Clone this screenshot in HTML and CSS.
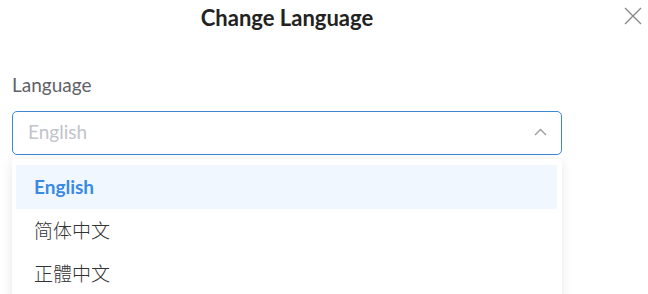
FILE: index.html
```html
<!DOCTYPE html>
<html>
<head>
<meta charset="utf-8">
<link rel="stylesheet" href="styles.css">
</head>
<body>
<div class="dialog">
  <div class="header">
    <div class="title">Change Language</div>
    <div class="close">
      <svg width="18" height="18" viewBox="0 0 18 18"><path d="M1 1 L17 17 M17 1 L1 17" stroke="#8a8a8a" stroke-width="1.4" fill="none"/></svg>
    </div>
  </div>
  <div class="field">
    <div class="label">Language</div>
    <div class="select">
      <span class="placeholder">English</span>
      <svg class="chev" width="13" height="8" viewBox="0 0 13 8"><path d="M1 7 L6.5 1.5 L12 7" stroke="#9a9a9a" stroke-width="1.3" fill="none"/></svg>
    </div>
    <div class="dropdown">
      <div class="item active">English</div>
      <div class="item cjk">简体中文</div>
      <div class="item cjk">正體中文</div>
    </div>
  </div>
</div>
</body>
</html>
```
FILE: styles.css
```css
html, body {
  margin: 0;
  padding: 0;
  background: #ffffff;
  font-family: Lato, "Noto Sans CJK SC", sans-serif;
}
.dialog {
  width: 648px;
  height: 294px;
  overflow: hidden;
}
.header {
  display: flex;
  align-items: flex-start;
  padding-left: 12px;
  height: 60px;
}
.title {
  width: 550px;
  text-align: center;
  font-weight: 700;
  font-size: 22px;
  color: #222222;
  padding-top: 5px;
  line-height: 26px;
}
.close {
  margin-left: 62px;
  padding-top: 7px;
  line-height: 0;
}
.field {
  padding-left: 12px;
  width: 550px;
}
.label {
  font-size: 19px;
  color: #606266;
  line-height: 24px;
  margin-top: 13px;
  height: 38px;
}
.select {
  box-sizing: border-box;
  height: 44px;
  border: 1px solid #3d87d8;
  border-radius: 5px;
  display: flex;
  align-items: center;
  justify-content: space-between;
  padding: 0 14px 0 15px;
}
.placeholder {
  font-size: 19px;
  color: #c0c4cc;
  padding-bottom: 3px;
}
.chev {
  margin-top: -2px;
}
.dropdown {
  margin-top: 4px;
  padding: 6px 5px 0 4px;
  background: #ffffff;
  box-shadow: 0 2px 12px rgba(0, 0, 0, 0.1);
  border-radius: 4px;
  height: 200px;
}
.item {
  box-sizing: border-box;
  height: 43px;
  display: flex;
  align-items: center;
  padding-left: 18px;
  padding-bottom: 2px;
  font-size: 19px;
  color: #333333;
}
.item.active {
  background: #f0f7ff;
  color: #3a8ae3;
  font-weight: 700;
  height: 44px;
}
.item.cjk {
  font-family: "Noto Sans CJK SC", sans-serif;
  font-weight: 300;
  font-size: 19px;
}
```
